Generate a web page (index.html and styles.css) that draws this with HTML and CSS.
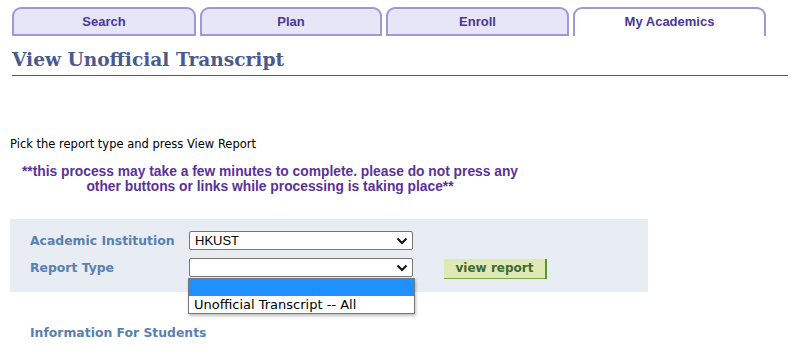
FILE: index.html
```html
<!DOCTYPE html>
<html lang="en">
<head>
  <meta charset="UTF-8" />
  <title>View Unofficial Transcript</title>
  <link rel="stylesheet" href="styles.css">
</head>
<body>

<div class="tabs">
  <div class="tab tab-search">Search</div>
  <div class="tab tab-plan">Plan</div>
  <div class="tab tab-enroll">Enroll</div>
  <div class="tab tab-active">My Academics</div>
</div>

<h1 class="page-title">View Unofficial Transcript</h1>

<p class="intro">Pick the report type and press View Report</p>

<p class="warning">**this process may take a few minutes to complete. please do not press any<br>other buttons or links while processing is taking place**</p>

<div class="report-box">
  <div class="form-row">
    <span class="field-label">Academic Institution</span>
    <div class="select">
      <span>HKUST</span>
      <svg width="12" height="8" viewBox="0 0 12 8"><path d="M1.5 1.5 L6 6 L10.5 1.5" fill="none" stroke="#111" stroke-width="2"/></svg>
    </div>
  </div>
  <div class="form-row">
    <span class="field-label">Report Type</span>
    <div class="select select-open">
      <span></span>
      <svg width="12" height="8" viewBox="0 0 12 8"><path d="M1.5 1.5 L6 6 L10.5 1.5" fill="none" stroke="#111" stroke-width="2"/></svg>
      <div class="dropdown">
        <div class="option option-selected">&nbsp;</div>
        <div class="option">Unofficial Transcript -- All</div>
      </div>
    </div>
    <button class="view-btn">view report</button>
  </div>
</div>

<h2 class="info-title">Information For Students</h2>

</body>
</html>
```

FILE: styles.css
```css
body {
  margin: 0;
  background: #fff;
  font-family: 'DejaVu Sans', Verdana, sans-serif;
  color: #000;
}

.tabs {
  display: flex;
  gap: 4px;
  padding: 7px 0 0 12px;
}

.tab {
  box-sizing: border-box;
  height: 29px;
  background: #e7e5f8;
  border: 2px solid #9c99d5;
  border-radius: 9px 9px 0 0;
  color: #4a3596;
  font-family: 'Liberation Sans', Arial, sans-serif;
  font-weight: bold;
  font-size: 13px;
  text-align: center;
  line-height: 25px;
}

.tab-search { width: 184px; }
.tab-plan { width: 182px; }
.tab-enroll { width: 183px; }

.tab-active {
  width: 193px;
  background: #fff;
  border-bottom: none;
}

.page-title {
  margin: 12px 0 0 12px;
  width: 776px;
  border-bottom: 1px solid #4a5a8c;
  padding-bottom: 4px;
  font-family: 'DejaVu Serif', Georgia, serif;
  font-size: 18.6px;
  font-weight: bold;
  color: #4a5a8c;
  line-height: 23px;
}

.intro {
  margin: 61px 0 0 10px;
  font-size: 11.5px;
  line-height: 15px;
}

.warning {
  margin: 12px 0 0 0;
  width: 540px;
  text-align: center;
  font-family: 'Liberation Sans', Arial, sans-serif;
  font-size: 13.8px;
  font-weight: bold;
  line-height: 15px;
  color: #5a3296;
}

.report-box {
  margin: 25px 0 0 10px;
  width: 638px;
  box-sizing: border-box;
  height: 73px;
  background: #e8edf4;
  padding: 12px 0 0 20px;
}

.form-row {
  display: flex;
  align-items: center;
  height: 19px;
  margin-bottom: 8px;
}

.field-label {
  width: 159px;
  font-size: 12.4px;
  font-weight: bold;
  color: #5a7fb3;
}

.select {
  position: relative;
  box-sizing: border-box;
  width: 224px;
  height: 19px;
  background: #fff;
  border: 1px solid #767676;
  border-radius: 2px;
  display: flex;
  align-items: center;
  justify-content: space-between;
  padding: 0 4px 0 5px;
  font-family: 'Liberation Sans', Arial, sans-serif;
  font-size: 13px;
}

.dropdown {
  position: absolute;
  left: -2px;
  top: 19px;
  width: 225px;
  background: #fff;
  border: 1px solid #767676;
  box-shadow: 1px 2px 3px rgba(0, 0, 0, 0.25);
  font-family: 'DejaVu Sans', Verdana, sans-serif;
  font-size: 13px;
}

.option {
  height: 17px;
  line-height: 17px;
  padding-left: 5px;
}

.option-selected {
  background: #1e90ff;
}

.view-btn {
  margin: 2px 0 0 31px;
  box-sizing: border-box;
  width: 103px;
  height: 20px;
  padding: 0;
  background: #dee9b6;
  border: none;
  border-right: 2px solid #5f9428;
  border-bottom: 1px solid #7aa83a;
  font-family: 'DejaVu Sans', Verdana, sans-serif;
  font-size: 12px;
  font-weight: bold;
  color: #3d6a33;
}

.info-title {
  margin: 33px 0 0 30px;
  font-size: 12.4px;
  font-weight: bold;
  color: #5a7fb3;
}
```
